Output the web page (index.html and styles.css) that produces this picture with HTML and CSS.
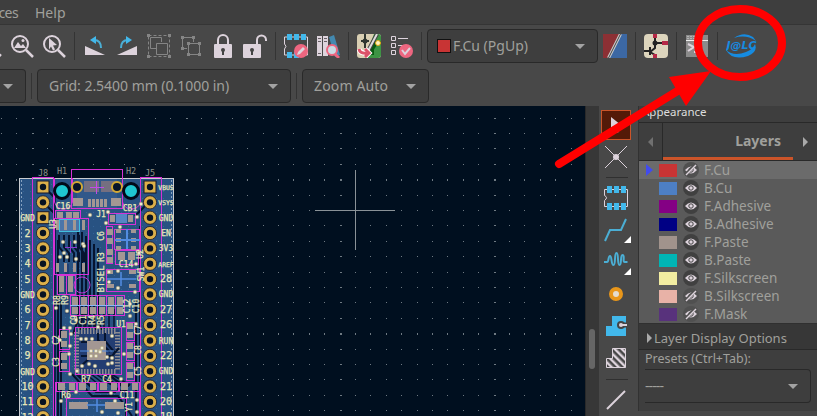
FILE: index.html
```html
<!DOCTYPE html>
<html lang="en">
<head>
<meta charset="utf-8">
<title>PCB Editor</title>
<link rel="stylesheet" href="styles.css">
</head>
<body>
<div class="window">
<nav class="menubar"><span>ces</span><span>Help</span></nav>

<div class="toolbar main-tools">
  <svg class="icon cut" viewBox="0 0 24 24"><path d="M15 15l8 7" class="ln3"/></svg>
  <svg class="icon" viewBox="0 0 24 24"><circle cx="10" cy="10" r="8" class="ln2"/><path d="M16 16l7 7" class="ln3"/><path d="M4 14l4-6 3 4 2-2 3 4z" class="pale"/><circle cx="13" cy="6.500" r="1.500" class="pale"/></svg>
  <svg class="icon" viewBox="0 0 24 24"><circle cx="10" cy="10" r="8" class="ln2"/><path d="M16 16l7 7" class="ln3"/><path d="M7 4l8 7-4 .5 2 4-2 1-2-4-2 3z" class="pale"/></svg>
  <i class="sep"></i>
  <svg class="icon" viewBox="0 0 24 24"><path d="M2 12v9h20z" class="pale"/><path d="M11 6c5 0 7 3 7 8" class="blue-ln"/><path d="M7 6l6-4v8z" class="blue"/></svg>
  <svg class="icon" viewBox="0 0 24 24"><path d="M22 12v9H2z" class="pale"/><path d="M13 6c-5 0-7 3-7 8" class="blue-ln"/><path d="M17 6l-6-4v8z" class="blue"/></svg>
  <svg class="icon dim" viewBox="0 0 24 24"><path d="M1.500 1.500h21v21h-21z" stroke-dasharray="3 2"/><path d="M9 14.500H3.500v-11h11V8M9.500 9.500h11v11h-11z"/><path d="M0 0h3v3H0zM21 0h3v3h-3zM0 21h3v3H0zM21 21h3v3h-3z" class="dim-fill"/></svg>
  <svg class="icon dim" viewBox="0 0 24 24"><path d="M8 14.500H3.500v-11h11V8M9.500 9.500h11v11h-11z"/><path d="M2 2h3v3H2zM13 2h3v3h-3zM2 13h3v3H2zM8 8h3v3H8zM19 8h3v3h-3zM8 19h3v3H8zM19 19h3v3h-3z" class="dim-fill"/></svg>
  <svg class="icon" viewBox="0 0 24 24"><path d="M7 11V6a5 5 0 0 1 10 0v5" class="ln2"/><rect x="3" y="10" width="18" height="14" rx="1" class="pale"/><circle cx="12" cy="16" r="2" class="dark"/><path d="M11 16h2v5h-2z" class="dark"/></svg>
  <svg class="icon" viewBox="0 0 24 24"><path d="M14 11V6a4.500 4.500 0 0 1 9 0v1" class="ln2"/><rect x="0" y="10" width="18" height="14" rx="1" class="pale"/><circle cx="9" cy="16" r="2" class="dark"/><path d="M8 16h2v5H8z" class="dark"/></svg>
  <i class="sep"></i>
  <svg class="icon" viewBox="0 0 24 24"><path d="M3 3H.5v7q3 2 0 5v6h23V3z" class="ln1"/><path d="M3 0h5v6H3zM10 0h5v6h-5zM17 0h5v6h-5zM3 18h5v6H3zM10 18h5v6h-5z" class="blue"/><circle cx="17" cy="17" r="7" class="pink"/><path d="M13 21l1-3 5-5 2 2-5 5z" class="pale"/></svg>
  <svg class="icon" viewBox="0 0 24 24"><path d="M1 2h5v20H1zM7 2h5v20H7z" class="pale"/><path d="M2 4.500h3M2 7.500h3M8 4.500h3M8 7.500h3M2 19.500h3" stroke="#665f65"/><path d="M13 3l5-2 6 20-5 2z" fill="#4389b0"/><circle cx="16" cy="16" r="5" fill="#c9dce5" stroke="#ed6680" stroke-width="2"/><path d="M19 20l4 4" stroke="#ed6680" stroke-width="3"/></svg>
  <i class="sep"></i>
  <svg class="icon" viewBox="0 0 24 24"><rect width="24" height="24" rx="3" fill="#d9cfb3"/><path d="M17 0h4q3 0 3 3v18q0 3-3 3H8z" fill="#3d9444"/><path d="M24 9h-5l-4 6v4h-4" fill="none" stroke="#085b10" stroke-width="4"/><circle cx="21" cy="9" r="2.500" fill="#fff4be" stroke="#e1a614"/><path d="M8 0v14M4 7h8" stroke="#303630" stroke-width="2"/><circle cx="8" cy="7" r="2.500" fill="#303630"/><path d="M20 0L11 17" stroke="#444" stroke-width="4"/><path d="M20 0L11 17" stroke="#ddd" stroke-width="2"/><path d="M2 15q1 5 8 4M8 15l4 4-4 4" fill="none" stroke="#fff" stroke-width="5"/><path d="M2 15q1 5 8 4M8 15l4 4-4 4" fill="none" stroke="#dc5269" stroke-width="3"/></svg>
  <svg class="icon" viewBox="0 0 24 24"><path d="M2.500 2.500h4v4h-4zM2.500 9.500h4v4h-4zM2.500 16.500h4v4h-4zM9 4.500h10M9 11.500h5" class="ln1"/><circle cx="17" cy="17" r="7" class="pink"/><path d="M13 16l3 4 5-6" class="ln2"/></svg>
  <i class="sep"></i>
  <div class="combo layer-combo"><i class="swatch-big"></i><span>F.Cu (PgUp)</span><i class="caret"></i></div>
  <svg class="icon" viewBox="0 0 24 24"><path d="M0 0h18L6 24H0z" fill="#8c3034"/><path d="M18 0h6v24H6z" fill="#3c68a4"/><path d="M17.500 0l-12 24" stroke="#ccc" stroke-width="3"/><path d="M17.500 0l-12 24" stroke="#444"/></svg>
  <i class="sep"></i>
  <svg class="icon" viewBox="0 0 24 24"><rect width="24" height="24" rx="4" fill="#ddd5bd"/><path d="M11 0v11M11 9h10M11 9v5l-5 4M6 13v8M0 17h6M6 18l5 3v3" fill="none" stroke="#222" stroke-width="2"/><circle cx="11" cy="9" r="2.500" fill="#222"/><path d="M9 0h4v4H9zM18 7h6v4h-6zM9 20h4v4H9z" fill="#b42846"/></svg>
  <i class="sep"></i>
  <svg class="icon" viewBox="0 0 24 24"><path d="M1 1h22v22H1z" fill="#8b8b8b"/><path d="M1 6.500h22" stroke="#eee"/><path d="M3 2v3M6 2v3M9 2v3" stroke="#ddd" stroke-dasharray="1 1"/><path d="M3 10l6 3-6 4M9 18h4" class="ln2"/></svg>
  <i class="sep"></i>
  <svg class="logo" viewBox="0 0 32 24"><path d="M8 4Q18-3 27 3L30 7Q20 0 8 4zM0 16Q8 23 20 18Q27 15 29 10Q32 18 22 22Q6 27 0 16z" fill="#168be0"/><text x="0.500" y="14.500" textLength="30" lengthAdjust="spacingAndGlyphs">J@LC</text></svg>
</div>

<div class="toolbar view-tools">
  <div class="combo units"><i class="caret"></i></div><i class="sep"></i>
  <div class="combo grid-combo"><span>Grid: 2.5400 mm (0.1000 in)</span><i class="caret"></i></div><i class="sep"></i>
  <div class="combo zoom-combo"><span>Zoom Auto</span><i class="caret"></i></div>
</div>

<main class="workspace">
  <svg class="canvas" id="board" viewBox="0 106 585 310"></svg>
  <div class="scroll"><i></i></div>
  <aside class="side-tools">
    <div class="tool active"><svg viewBox="0 0 30 30"><path d="M10 7l10 8h-5l3 7-3 1-2-6-3 3z" class="pale"/></svg></div>
    <div class="tool t2"><svg viewBox="0 0 30 30"><path d="M4 4l22 22M26 4L4 26" class="ln1"/><circle cx="15" cy="15" r="3" class="pale"/></svg></div>
    <hr>
    <div class="tool t3"><svg viewBox="0 0 30 30"><path d="M5 6.500H3.500v6q4 2 0 5v6h23v-17z" class="ln1"/><path d="M6 3h5v7H6zM13 3h5v7h-5zM20 3h5v7h-5zM6 20h5v7H6zM13 20h5v7h-5zM20 20h5v7h-5z" class="blue"/></svg></div>
    <div class="tool t4"><svg viewBox="0 0 30 30"><path d="M4 25l5-11h11l5-11" class="blue-ln"/><path d="M30 20v7h-7z" fill="#fff"/></svg></div>
    <div class="tool t5"><svg viewBox="0 0 30 30"><path d="M3 14h3c2 0 1-6 3-6s1 9 3.500 9 .5-12 3-12 .5 12 3 12 .5-10 3-10 0 7 2 7h3" class="blue-ln"/><path d="M30 20v7h-7z" fill="#fff"/></svg></div>
    <div class="tool t6"><svg viewBox="0 0 30 30"><circle cx="15" cy="14" r="5" fill="#e5ddce" stroke="#e8961a" stroke-width="4"/></svg></div>
    <div class="tool t7"><svg viewBox="0 0 30 30"><path d="M11 4h14v20H5V14h6z" class="blue"/><path d="M26 13h-6" stroke="#444" stroke-width="5"/><circle cx="20" cy="13" r="4" class="dark"/><path d="M20 13h6" class="ln2"/><circle cx="20" cy="13" r="2" class="pale"/></svg></div>
    <div class="tool t8"><svg viewBox="0 0 30 30"><defs><pattern id="hatch" width="5" height="5" patternUnits="userSpaceOnUse" patternTransform="rotate(-45)"><path d="M1.200 0v5" stroke="#ddd3dc" stroke-width="2.400"/></pattern></defs><path d="M11.500 4.500h13v19h-19v-9h6z" fill="url(#hatch)" stroke="#ddd3dc"/></svg></div>
    <hr>
    <div class="tool t9"><svg viewBox="0 0 30 30"><path d="M6 24L24 6" class="ln2"/></svg></div>
  </aside>
  <section class="panel">
    <h2>Appearance</h2>
    <div class="tabs"><div class="tab-arrow"><i class="tri-left"></i></div><div class="tab">Layers</div><i class="tri-right"></i></div>
    <div class="layers" id="layers"></div>
    <div class="options"><i class="tri-right"></i><span>Layer Display Options</span></div>
    <div class="presets"><label>Presets (Ctrl+Tab):</label><div class="combo preset-combo"><span>-----</span><i class="caret"></i></div></div>
  </section>
</main>
</div>
<svg class="callout" viewBox="0 0 817 416"><ellipse cx="740" cy="43" rx="42" ry="34"/><path d="M559 164L684 87"/><path class="head" d="M711 71L669 77 686 106z"/></svg>
<script src="board.js"></script>
</body>
</html>
```
FILE: styles.css
```css
* { box-sizing: border-box; }
body { margin: 0; background: #484848; color: #a0a09c; font: 14px "Noto Sans", sans-serif; overflow: hidden; }
.window { width: 817px; height: 416px; display: flex; flex-direction: column; overflow: hidden; }
svg { display: block; flex: none; }
.menubar { height: 25px; background: #3e3e3e; border-bottom: 1px solid #353535; display: flex; gap: 17px; line-height: 26px; margin: 0; }
.menubar span:first-child { width: 18px; display: flex; justify-content: flex-end; letter-spacing: -.6px; }
.toolbar { display: flex; align-items: center; flex: none; }
.main-tools { height: 42px; gap: 8px; }
.view-tools { height: 39px; gap: 5px; padding-bottom: 1px; }
.icon { width: 24px; height: 24px; }
.cut { margin-left: -22px; }
.sep { width: 1px; height: 28px; background: #343434; flex: none; }
.view-tools .sep { height: 26px; }
.combo { height: 34px; border: 1px solid #292929; border-radius: 4px; background: #3e3e3e; display: flex; align-items: center; justify-content: space-between; padding: 0 12px 0 11px; flex: none; white-space: nowrap; }
.combo span { position: relative; top: -1px; }
.caret { border: 5px solid transparent; border-top-color: #a3a3a3; border-bottom: 0; flex: none; }
.layer-combo { width: 171px; margin: 0 -3px; padding: 0 12px 0 9px; }
.layer-combo span { flex: 1; margin-left: 2px; font-size: 14px; }
.swatch-big { width: 14px; height: 14px; background: #c83434; border: 1px solid #111; }
.units { width: 26px; border-left: 0; border-radius: 0 4px 4px 0; padding: 0 12px 0 3px; }
.grid-combo { width: 254px; }
.grid-combo span { letter-spacing: -.03px; }
.zoom-combo { width: 127px; }
.zoom-combo span { letter-spacing: .15px; }
.logo { width: 32px; height: 24px; }
.logo text { font: italic bold 10.500px "DejaVu Sans", sans-serif; fill: #168be0; }
.ln1, .ln2, .ln3 { fill: none; stroke: #ddd3dc; }
.ln2 { stroke-width: 2; }
.ln3 { stroke-width: 2.500; }
.pale { fill: #ddd3dc; }
.dark { fill: #444; }
.blue { fill: #42b8eb; }
.blue-ln { fill: none; stroke: #4baed4; stroke-width: 2; }
.pink { fill: #ed6680; }
.dim { fill: none; stroke: #858585; }
.dim-fill { fill: #858585; stroke: none; }

.workspace { display: flex; height: 310px; }
.canvas { width: 585px; height: 310px; background: #000f1f; }
.canvas text { font-family: "DejaVu Sans Mono", monospace; fill: #e8e8ba; stroke: #e8e8ba; stroke-width: .25px; }
.canvas text.faint { fill: #8f9289; stroke: none; }
.scroll { width: 14px; background: #373737; border-left: 1px solid #292929; padding: 223px 0 0 3px; }
.scroll i { display: block; width: 6px; height: 40px; border-radius: 3px; background: #666; }
.side-tools { width: 39px; padding: 4px 0 0 2px; }
.side-tools hr { width: 22px; margin: 0 0 0 5px; border: 0; border-top: 1px solid #303030; }
.tool, .tool svg { width: 30px; height: 30px; }
.active { background: #541a08; border: 1px solid #cb5429; }
.active svg { margin: -1px; }
.t2 { margin: 2px 0 5px; }
.t3 { margin: 5px 0 0; height: 30px; }
.t4 { margin-top: 3px; }
.t5, .t6, .t7 { margin-top: 2px; }
.t8 { margin: 2px 0 5px; }
.t9 { margin-top: 5px; }

.panel { width: 179px; background: #3e3e3e; height: 305px; border-left: 1px solid #323232; overflow: hidden; }
.panel h2 { margin: 0; height: 17px; font-size: 11.500px; font-weight: normal; line-height: 12px; padding-left: 3px; color: #ddd; border-bottom: 1px solid #292929; }
.tabs { height: 38px; display: flex; align-items: center; border-bottom: 1px solid #292929; }
.tab-arrow { width: 24px; height: 37px; border-right: 1px solid #292929; display: flex; align-items: center; padding-left: 9px; }
.tab { width: 130px; height: 37px; border-bottom: 3px solid #cb5429; text-align: right; padding-right: 12px; line-height: 36px; font-weight: bold; font-size: 14px; }
.tri-left, .tri-right { border: 5px solid transparent; flex: none; }
.tri-left { border-right-color: #707070; border-left: 0; }
.tri-right { border-left-color: #aaa; border-right: 0; }
.tabs > .tri-right { margin-left: 10px; }
.layers { height: 163px; background: #5a5a5a; overflow: hidden; border-bottom: 1px solid #303030; }
.layer { height: 18px; display: flex; align-items: center; font-size: 13.500px; white-space: nowrap; }
.layer.current { background: #6b6b6b; }
.marker { width: 20px; padding-left: 7px; flex: none; }
.marker i { display: block; border: 6px solid transparent; border-left: 7px solid #414bef; border-right: 0; width: 0; }
.color { width: 18px; height: 13px; flex: none; }
.eye { width: 16px; height: 16px; margin: 0 5px 0 6px; }
.options { height: 26px; background: #373737; border-bottom: 1px solid #292929; display: flex; align-items: center; gap: 2px; padding: 3px 0 0 8px; font-size: 13px; white-space: nowrap; }
.presets { padding: 0 6px 0 6px; }
.presets label { display: block; height: 19px; line-height: 18px; font-size: 12.500px; }
.preset-combo { border-left: 0; border-radius: 0 4px 4px 0; padding-left: 0; padding-right: 12px; }
.preset-combo span { letter-spacing: -.9px; }
.callout { position: absolute; left: 0; top: 0; width: 817px; height: 416px; fill: none; stroke: #f00; stroke-width: 8; stroke-linecap: round; pointer-events: none; }
.callout .head { fill: #f00; stroke: none; }
```
FILE: board.js
```js
const out = [];
const rect = (x, y, w, h, fill, extra = '') => out.push(`<rect x="${x}" y="${y}" width="${w}" height="${h}" fill="${fill}" ${extra}/>`);
const MAG = '#d631d6';
const box = (x, y, w, h, c = MAG) => rect(Math.floor(x) + .5, Math.floor(y) + .5, w, h, 'none', `stroke="${c}" stroke-width="1"`);
const line = (d, c, w = 1, extra = '') => out.push(`<path d="${d}" fill="none" stroke="${c}" stroke-width="${w}" ${extra}/>`);
const circle = (x, y, r, fill, extra = '') => out.push(`<circle cx="${x}" cy="${y}" r="${r}" fill="${fill}" ${extra}/>`);
const text = (x, y, s, size = 9, extra = '') => s && out.push(`<text x="${x}" y="${y}" font-size="${size}" text-anchor="middle" ${extra}>${s}</text>`);
const up = (x, y, s, size = 8) => text(x, y, s, size, `transform="rotate(-90 ${x} ${y})"`);
const PASTE = '#a39793', DARK = '#06142f';

// grid, with every tenth line heavier
for (let i = -23; i < 15; i++) for (let j = -6; j < 14; j++) {
  const w = (i + 1) % 10 === 0 ? 2 : 1, h = (j + 2) % 10 === 0 ? 2 : 1;
  rect(Math.round(355 + i * 15.4), Math.round(210 + j * 15.4), w, h, '#6f7a83');
}
rect(315, 210, 80, 1, '#8a9297');
rect(355, 170, 1, 80, '#8a9297');

// board body and copper
rect(19.5, 178.5, 154, 240, '#285282', 'stroke="#c9ccd0"');
line('M21.5 180V416M171.500 180V416', '#86a2c0', 1, 'stroke-dasharray="2 2"');
for (let y = 184; y < 416; y += 7) line(`M23 ${y}.5h146`, '#356397', 1, 'stroke-dasharray="1 6"');
line('M47 190l8 8v218M58 240v176M61 300v116M136 300v116M140 226v190M47 206l8 8M145 206l-10 10', DARK, 2);
for (let i = 0; i < 6; i++) line(`M${78 + i * 4} ${228 + i * 4}v${92 - i * 4}l${i * 2 - 5} 14`, DARK, 2);
for (let i = 0; i < 8; i++) line(`M${79 + i * 5} 309v20M${76 + i * 5} 374l${10 + i} 10`, DARK, 1.5);
line('M72 374l20 22h26l14 20M78 374l18 18h20M102 378l20 14 8-8M110 375l16 15v26M62 398l8-8', DARK, 2);
line('M55 190V416M66 264v50M68 264v50M87 310v20M91 310v20', '#162b62');

// USB connector and mounting holes
rect(77, 179, 40, 29, '#31588a');
box(71, 169, 51, 39); box(32, 177, 21, 245); box(140, 177, 21, 245);
line('M54.5 178v24q2 7 9 7t9-7v-24M122.500 178v24q2 7 9 7t9-7v-24', MAG);
rect(84, 181, 15, 11, '#756f80'); rect(101, 181, 15, 11, '#756f80');
line('M96.5 181v13M90 187.5h14', '#c04be8');
[73, 111].forEach(x => rect(x, 198, 10, 8, PASTE));
for (let i = 0; i < 5; i++) rect(88 + i * 4, 199, 3, 8, PASTE);
[77, 117].forEach(x => circle(x, 187, 5, '#071329', 'stroke="#d3a934" stroke-width="2"'));
[62, 131].forEach(x => circle(x, 191, 7.5, '#1fc6d0', 'stroke="#000a19" stroke-width="3"'));

// left chip area
box(54, 218, 34, 56); box(55, 210, 25, 8);
[57, 66, 73].forEach(x => rect(x, 212, 6, 6, PASTE));
rect(59.5, 219.5, 20, 12, '#4c75a9', 'stroke="#41bfdf"');
[56, 64, 73, 82].forEach(x => { rect(x, 220, 3, 10, PASTE); rect(x, 263, 3, 9, PASTE); });
for (let i = 0; i < 5; i++) line(`M${59 + i * 5} 235v12l5 6v9`, DARK, 2);
line('M70.5 241v12M65 247.5h12', '#8e39d0');
[59, 68].forEach(x => { rect(x, 276, 5, 16, PASTE); box(x - 2, 275, 9, 19); });
circle(82, 285, 8, 'none', 'stroke="#c137d8"');

// right chip area
box(108, 213, 27, 11); rect(110, 215, 5, 7, PASTE); rect(128, 215, 5, 7, PASTE); rect(116, 214, 11, 9, '#5686c5');
box(106, 226, 6, 37); [229, 238, 249, 257].forEach(y => rect(107, y, 6, 6, PASTE));
box(114, 229, 25, 20); [229, 238, 246].forEach(y => { rect(116, y, 5, 4, PASTE); rect(131, y, 5, 4, PASTE); });
line('M115 240h25M127 229v20', '#528ce1', 2);
box(115, 250, 23, 14); rect(118, 252, 7, 8, PASTE); rect(128, 252, 7, 8, PASTE);
box(106, 269, 33, 22); rect(107, 270, 6, 4, PASTE); rect(129, 270, 7, 4, PASTE); rect(107, 284, 7, 4, PASTE); rect(129, 284, 7, 4, PASTE);
line('M107 279h29M121 272v14', '#528ce1', 1.5);

// resistor row
for (let i = 0; i < 6; i++) {
  const x = 70 + i * 9;
  box(x, 295, 9, 20);
  rect(x + 2, 297, 6, 8, PASTE); rect(x + 2, 307, 6, 7, PASTE);
  line(`M${x} 305.5h9`, '#8db6f2');
}

// main controller
rect(77, 330, 42, 43, '#233d72');
for (let i = 0; i < 13; i++) {
  rect(78 + i * 3, 327, 1.5, 7, '#8d8b91'); rect(78 + i * 3, 369, 1.5, 5, '#8d8b91');
  rect(74, 332 + i * 3, 5, 1.5, '#8d8b91'); rect(115, 332 + i * 3, 5, 1.5, '#8d8b91');
}
line('M81 356h31l7-8M82 365l10-9M98 333v7l12 12M105 333v8l10 12M81 342h10l5 5', DARK, 2);
rect(87, 341, 19, 19, PASTE);
line('M80 351h34', '#528ce1');
box(75, 327, 46, 47);
[332, 354].forEach(y => { box(59, y - 3, 10, 20); rect(61, y - 1, 6, 7, PASTE); rect(61, y + 9, 6, 6, PASTE); });
[322, 342, 362].forEach(y => { box(126, y, 8, 18); rect(127, y + 1, 6, 6, PASTE); rect(127, y + 10, 6, 6, PASTE); });

// lower row
for (let i = 0; i < 4; i++) {
  const x = 56 + i * 21; box(x, 382, 20, 9);
  rect(x + 2, 383, 7, 7, PASTE); rect(x + 13, 383, 6, 7, PASTE);
}
rect(69, 402, 19, 7, PASTE); rect(105, 402, 19, 7, PASTE);
line('M87 405h18M97 399v13', '#528ce1', 1.5);
box(66, 398, 60, 24); box(55, 382, 84, 40);

// vias
const vias = '90,215 108,212 141,204 106,223 137,217 120,227 63,242 75,242 83,244 64,253 60,257 67,257 76,259 84,246 139,253 136,264 109,272 118,271 109,282 118,288 135,292 56,308 67,311 130,316 130,304 64,328 70,328 76,320 98,327 112,336 81,339 86,339 92,339 91,351 96,351 100,351 91,356 96,356 102,348 100,352 107,357 112,358 82,366 89,364 95,366 108,364 112,363 70,374 77,371 124,354 61,401 76,392 111,393 137,400 137,412 102,412 118,413 70,346 69,354 71,334 121,379 136,324 60,340 115,401';
vias.split(' ').forEach(p => { const [x, y] = p.split(','); circle(x, y, 1.8, '#ece8d2', 'stroke="#a69b68" stroke-width=".5"'); });

// header pads with labels
const left = ['', '', 'GND', '2', '3', '4', '5', 'GND', '6', '7', '8', '9', 'GND', '10', '11', '12'];
const right = ['VBUS', 'VSYS', 'GND', 'EN', '3V3', 'AREF', '28', 'GND', '27', '26', 'RUN', '22', 'GND', '21', '20', '19'];
left.forEach((name, i) => {
  const y = 187 + i * 15.35;
  [43, 150].forEach(x => {
    if (i === 0 || (i === 2 && x === 43)) rect(x - 6, y - 6, 12, 12, '#dcb04a', 'stroke="#15172a"');
    else circle(x, y, 6.6, '#dcb04a', 'stroke="#15172a" stroke-width=".8"');
    circle(x, y, 3.2, '#081321');
  });
  const label = right[i];
  text(27.500, y + 3.500, name, name.length > 2 ? 8 : 10);
  text(166, y + 3, label, label.length > 3 ? 6.4 : label.length > 2 || label === 'EN' ? 8 : 10);
});
[['J8', 43, 176], ['H1', 62, 174], ['H2', 131, 174], ['J5', 150, 176]].forEach(a => text(a[1], a[2], a[0], 8.5, 'class="faint"'));
[['C16', 63, 209], ['CB1', 130, 211], ['J1', 101, 217], ['C14', 126, 267], ['U1', 121, 327], ['R7', 86, 382], ['C4', 107, 382], ['R6', 66, 398], ['C11', 127, 398]].forEach(a => text(a[1], a[2], a[0], 8));
[['C6', 104, 236], ['R3', 104, 257], ['BTSEL', 104, 279, 9], ['SW1', 144, 274], ['U2', 143, 254], ['R8', 60, 300], ['R9', 68, 300], ['C9', 77, 320], ['C1', 86, 320], ['R4', 95, 320], ['R5', 104, 320], ['C12', 130, 306], ['C10', 139, 306], ['C2', 59, 340], ['C3', 59, 362], ['C7', 141, 330], ['C8', 141, 350], ['C5', 141, 371], ['Y1', 132, 407], ['U3', 56, 224]].forEach(a => up(a[1], a[2], a[0], a[3] || 8));
document.getElementById('board').innerHTML = out.join('');

const layers = [['F.Cu', '#c83434', 0], ['B.Cu', '#4d7fc4', 1], ['F.Adhesive', '#840084', 1], ['B.Adhesive', '#000084', 1], ['F.Paste', '#a1938c', 1], ['B.Paste', '#00b5b5', 1], ['F.Silkscreen', '#f2eda1', 1], ['B.Silkscreen', '#e8b2a7', 0], ['F.Mask', '#58327c', 0]];
document.getElementById('layers').innerHTML = layers.map(([name, color, on], i) => `<div class="layer${i ? '' : ' current'}"><div class="marker">${i ? '' : '<i></i>'}</div><div class="color" style="background:${color}"></div><svg class="eye" viewBox="0 0 16 16"><circle cx="8" cy="8" r="8" fill="${on ? '#404040' : '#505050'}"/><path d="M2 8q6-7 12 0q-6 7-12 0z" fill="#ddd3dc"/><circle cx="8" cy="8" r="2.2" fill="#ddd3dc" stroke="#444"/>${on ? '' : '<path d="M2 13L13 2" stroke="#505050" stroke-width="3"/><path d="M3 13L13 3" stroke="#ddd3dc" stroke-width="1.5"/>'}</svg><span>${name}</span></div>`).join('');
```
